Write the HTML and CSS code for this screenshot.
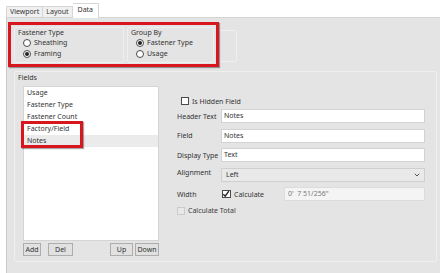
FILE: index.html
```html
<!DOCTYPE html>
<html lang="en">

<head>
  <meta charset="UTF-8">
  <meta name="viewport" content="width=device-width, initial-scale=1.0">
  <title>Data</title>
  <link rel="stylesheet" href="styles.css">
</head>

<body>
  <div class="tabs">
    <div class="tab tab-viewport">Viewport</div>
    <div class="tab tab-layout">Layout</div>
    <div class="tab active">Data</div>
  </div>

  <div class="panel">
    <!-- Fastener / group options -->
    <div class="top-row">
      <div class="group g-type">
        <div class="group-title">Fastener Type</div>
        <div class="radio"><span class="dot"></span>Sheathing</div>
        <div class="radio"><span class="dot on"></span>Framing</div>
      </div>
      <div class="group g-by">
        <div class="group-title">Group By</div>
        <div class="radio"><span class="dot on"></span>Fastener Type</div>
        <div class="radio"><span class="dot"></span>Usage</div>
      </div>
      <div class="group g-empty"></div>
    </div>

    <!-- Fields -->
    <div class="group fields">
      <div class="group-title">Fields</div>
      <div class="fields-body">
        <div class="list-col">
          <ul class="list">
            <li>Usage</li>
            <li>Fastener Type</li>
            <li>Fastener Count</li>
            <li>Factory/Field</li>
            <li class="selected">Notes</li>
          </ul>
          <div class="list-buttons">
            <button class="btn btn-add">Add</button>
            <button class="btn btn-del">Del</button>
            <button class="btn btn-up">Up</button>
            <button class="btn btn-down">Down</button>
          </div>
        </div>

        <div class="form">
          <div class="row row-hidden">
            <span class="check"></span>Is Hidden Field
          </div>
          <div class="row">
            <span class="label">Header Text</span>
            <div class="input">Notes</div>
          </div>
          <div class="row">
            <span class="label">Field</span>
            <div class="input">Notes</div>
          </div>
          <div class="row">
            <span class="label">Display Type</span>
            <div class="input">Text</div>
          </div>
          <div class="row">
            <span class="label label-top">Alignment</span>
            <div class="input select">Left
              <svg class="chevron" width="6" height="4" viewBox="0 0 6 4">
                <path d="M0.8 0.8 L3 3 L5.2 0.8" fill="none" stroke="#555" stroke-width="1"/>
              </svg>
            </div>
          </div>
          <div class="row">
            <span class="label">Width</span>
            <span class="check checked">
              <svg width="8" height="8" viewBox="0 0 8 8">
                <path d="M1.3 4.2 L3.2 6.2 L6.8 1.2" fill="none" stroke="#222" stroke-width="1.4"/>
              </svg>
            </span>
            <span class="calc-text">Calculate</span>
            <div class="input readonly">0'&nbsp;&nbsp;7 51/256"</div>
          </div>
          <div class="row row-total">
            <span class="check disabled"></span>Calculate Total
          </div>
        </div>
      </div>
    </div>
  </div>

  <!-- red highlight marks -->
  <div class="mark mark-groups"></div>
  <div class="mark mark-fields"></div>
</body>
</html>
```

FILE: styles.css
```css
* {
  box-sizing: border-box;
}

html,
body {
  margin: 0;
  padding: 0;
}

body {
  width: 440px;
  height: 273px;
  overflow: hidden;
  position: relative;
  background-color: #ffffff;
  font-family: "Noto Sans", "Open Sans", sans-serif;
  font-size: 7px;
  color: #333333;
}

/* Tabs */
.tabs {
  display: flex;
  align-items: flex-end;
  height: 17px;
  padding-left: 6px;
}

.tab {
  height: 11px;
  line-height: 10px;
  padding: 0 3px;
  background-color: #f0f0f0;
  border: 1px solid #d6d6d6;
  border-bottom: none;
}

.tab-viewport {
  padding: 0 3px;
}

.tab-layout {
  border-left: none;
}

.tab.active {
  position: relative;
  z-index: 1;
  height: 15px;
  line-height: 12px;
  margin-bottom: -1px;
  padding: 0 5px;
  background-color: #ffffff;
  border-left: none;
}

/* Panel */
.panel {
  margin-left: 6px;
  height: 256px;
  background-color: #e4e4e4;
  border-top: 1px solid #d4d4d4;
  border-left: 1px solid #c9c9c9;
}

.group {
  border: 1px solid #efefef;
  border-radius: 2px;
}

.group-title {
  line-height: 9px;
  padding-left: 3px;
}

.top-row {
  display: flex;
  align-items: flex-start;
  padding: 9px 0 0 7px;
}

.g-type {
  width: 110px;
  height: 36px;
}

.g-by {
  width: 87px;
  height: 36px;
  margin-left: 3px;
}

.g-empty {
  width: 20px;
  height: 32px;
  margin: 3px 0 0 3px;
}

.radio {
  display: flex;
  align-items: center;
  height: 11px;
  padding-left: 8px;
}

.radio:first-of-type {
  margin-top: 2px;
}

.dot {
  width: 8px;
  height: 8px;
  margin-right: 3px;
  border: 1px solid #4a4a4a;
  border-radius: 50%;
  background-color: #ffffff;
  display: flex;
  align-items: center;
  justify-content: center;
}

.dot.on::after {
  content: "";
  width: 4px;
  height: 4px;
  border-radius: 50%;
  background-color: #222;
}

/* Fields */
.fields {
  width: 423px;
  height: 191px;
  margin: 8px 0 0 7px;
}

.fields .group-title {
  margin-top: 1px;
}

.fields-body {
  display: flex;
  margin-top: 4px;
}

.list-col {
  width: 136px;
  margin-left: 8px;
}

.list {
  list-style: none;
  margin: 0;
  padding: 0;
  height: 155px;
  background-color: #ffffff;
  border: 1px solid #d5d5d5;
}

.list li {
  line-height: 12px;
  padding-left: 3px;
}

.list li.selected {
  background-color: #ebebeb;
}

.list-buttons {
  display: flex;
  margin-top: 2px;
}

.btn {
  height: 13px;
  padding: 0;
  font-family: inherit;
  font-size: 7px;
  color: #333333;
  background-color: #e1e1e1;
  border: 1px solid #adadad;
}

.btn-add {
  width: 18px;
}

.btn-del {
  width: 25px;
  margin-left: 7px;
}

.btn-up {
  width: 23px;
  margin-left: auto;
}

.btn-down {
  width: 24px;
  margin-left: 2px;
}

/* Form */
.form {
  display: flex;
  flex-direction: column;
  width: 248px;
  margin-left: 18px;
}

.row {
  display: flex;
  align-items: center;
  height: 14px;
  margin-top: 5.5px;
}

.row-hidden {
  height: 10px;
  margin-top: 10px;
  padding-left: 4px;
}

.row-hidden + .row {
  margin-top: 3px;
}

.label {
  width: 44px;
  flex-shrink: 0;
}

.label-top {
  align-self: flex-start;
}

.input {
  flex: 1;
  height: 14px;
  line-height: 12px;
  padding-left: 2px;
  background-color: #ffffff;
  border: 1px solid #d3d3d3;
}

.select {
  display: flex;
  align-items: center;
  padding-left: 4px;
  background-color: #e9e9e9;
  border-color: #cfcfcf;
}

.chevron {
  margin-left: auto;
  margin-right: 4px;
}

.check {
  width: 8px;
  height: 8px;
  margin-right: 3px;
  flex-shrink: 0;
  background-color: #ffffff;
  border: 1px solid #4a4a4a;
}

.check svg {
  display: block;
  margin: -1px 0 0 -1px;
}

.check.checked {
  width: 9px;
  margin-left: 1px;
}

.check.disabled {
  background-color: #e8e8e8;
  border-color: #cacaca;
}

.calc-text {
  width: 50px;
}

.readonly {
  flex: 0 0 141px;
  padding-left: 3px;
  color: #7a7a7a;
  background-color: #f4f4f4;
  border-color: #dcdcdc;
}

.row-total {
  height: 9px;
  margin-top: 5px;
  color: #3a3a3a;
}

/* Red annotation boxes drawn over the screenshot */
.mark {
  position: absolute;
  border: 3px solid #d8161d;
  box-shadow: 1px 1px 1px rgba(0, 0, 0, 0.35);
}

.mark-groups {
  left: 8px;
  top: 22px;
  width: 211px;
  height: 45px;
}

.mark-fields {
  left: 21px;
  top: 121px;
  width: 62px;
  height: 27px;
}
```
